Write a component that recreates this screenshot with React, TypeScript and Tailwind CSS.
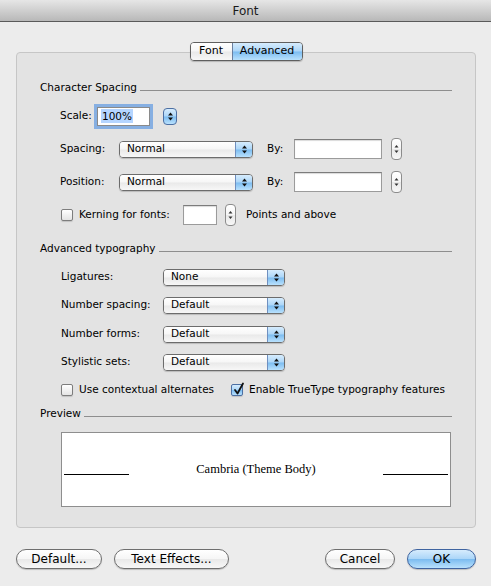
import React from "react";

// Aqua-style gradients used across the dialog
const BLUE = "bg-[linear-gradient(to_bottom,#d6ecfd_0%,#acd6f8_48%,#7cbcf0_52%,#b9e1fd_100%)]";
const WHITE = "bg-[linear-gradient(to_bottom,#ffffff_0%,#f6f6f6_48%,#e9e9e9_52%,#f7f7f7_100%)]";

function Arrows({ color = "#111" }: { color?: string }) {
  return (
    <svg width="7" height="11" viewBox="0 0 7 11">
      <path d="M3.5 1.5 L6 4.5 H1 Z" fill={color} />
      <path d="M3.5 9.5 L6 6.5 H1 Z" fill={color} />
    </svg>
  );
}

function Popup({ value, width }: { value: string; width: string }) {
  return (
    <div
      className={`flex h-[17px] ${width} overflow-hidden rounded-[4px] border border-[#6c6c6c] shadow-[0_1px_1px_rgba(0,0,0,0.18)]`}
    >
      <div className={`flex flex-1 items-center pl-[7px] ${WHITE}`}>{value}</div>
      <div className={`flex w-[17px] items-center justify-center border-l border-[#6f8fbf] ${BLUE}`}>
        <Arrows />
      </div>
    </div>
  );
}

function Stepper({ h = "h-[22px]", w = "w-[11px]" }: { h?: string; w?: string }) {
  return (
    <div
      className={`flex ${h} ${w} items-center justify-center rounded-[4px] border border-[#8c8c8c] ${WHITE}`}
    >
      <svg width="5" height="12" viewBox="0 0 5 12">
        <path d="M2.5 2 L4.5 4.5 H0.5 Z" fill="#333" />
        <path d="M2.5 10 L4.5 7.5 H0.5 Z" fill="#333" />
      </svg>
    </div>
  );
}

function Field({ width, h = "h-[20px]" }: { width: string; h?: string }) {
  return (
    <div
      className={`${width} ${h} border border-[#9b9b9b] border-t-[#7c7c7c] bg-white shadow-[inset_0_1px_1px_rgba(0,0,0,0.15)]`}
    />
  );
}

function Checkbox({ checked = false }: { checked?: boolean }) {
  return (
    <div
      className={`relative h-[12px] w-[12px] rounded-[2px] border ${
        checked ? `border-[#4c6fa3] ${BLUE}` : `border-[#7d7d7d] bg-[linear-gradient(to_bottom,#ffffff,#e4e4e4)]`
      } shadow-[0_1px_1px_rgba(0,0,0,0.15)]`}
    >
      {checked && (
        <svg className="absolute -top-[3px] left-[1px]" width="12" height="14" viewBox="0 0 12 14">
          <path d="M2 8 L4.5 11.5 L10 1.5" fill="none" stroke="#111" strokeWidth="1.8" strokeLinecap="round" strokeLinejoin="round" />
        </svg>
      )}
    </div>
  );
}

function Heading({ title }: { title: string }) {
  return (
    <div className="flex h-[14px] items-center">
      <span className="leading-none">{title}</span>
      <div className="ml-[3px] mt-[7px] h-px flex-1 bg-[#8e8e8e]" />
    </div>
  );
}

function Button({ label, width, primary = false }: { label: string; width: string; primary?: boolean }) {
  return (
    <div
      className={`flex h-[20px] ${width} items-center justify-center rounded-full border text-[12px] ${
        primary ? `border-[#3f64a0] ${BLUE}` : `border-[#6e6e6e] ${WHITE}`
      } shadow-[0_1px_1px_rgba(0,0,0,0.2)]`}
    >
      {label}
    </div>
  );
}

export default function App() {
  return (
    <div className="h-[586px] w-[491px] overflow-hidden bg-[#ececec] text-[10.5px] text-black [font-family:'DejaVu_Sans',sans-serif]">
      {/* title bar */}
      <div className="flex h-[22px] items-center justify-center border-b border-[#5a5a5a] bg-[linear-gradient(to_bottom,#e6e6e6,#b8b8b8)] text-[12px] text-[#1a1a1a]">
        Font
      </div>

      {/* tabs */}
      <div className="relative z-10 mt-[20px] flex justify-center pl-[1px]">
        <div className="flex h-[19px] overflow-hidden rounded-[4px] border border-[#5f5f5f] text-[11px] shadow-[0_1px_1px_rgba(0,0,0,0.2)]">
          <div className={`flex w-[41px] items-center justify-center ${WHITE}`}>Font</div>
          <div className={`flex w-[70px] items-center justify-center border-l border-[#6a7f9f] ${BLUE}`}>Advanced</div>
        </div>
      </div>

      {/* group box */}
      <div className="-mt-[9px] ml-[16px] w-[460px] rounded-[4px] border border-[#c6c6c6] bg-[#e3e3e3] px-[23px] pb-[20px] pt-[27px]">
        <Heading title="Character Spacing" />

        <div className="ml-[20px] mt-[11px] flex h-[22px] items-center">
          <span className="w-[37px]">Scale:</span>
          <div className="flex h-[19px] w-[53px] items-center border border-[#8a8a8a] bg-white pl-[3px] ring-[3px] ring-[#86afe2]">
            <span className="bg-[#b5d5ff] px-[1px] leading-[14px]">100%</span>
          </div>
          <div className={`ml-[13px] flex h-[17px] w-[14px] items-center justify-center rounded-[4px] border border-[#4c6fa3] ${BLUE}`}>
            <Arrows />
          </div>
        </div>

        {["Spacing:", "Position:"].map((label) => (
          <div key={label} className="ml-[20px] mt-[11px] flex h-[22px] items-center">
            <span className="w-[59px]">{label}</span>
            <Popup value="Normal" width="w-[134px]" />
            <span className="ml-[14px] w-[27px]">By:</span>
            <Field width="w-[88px]" />
            <div className="ml-[9px]">
              <Stepper />
            </div>
          </div>
        ))}

        <div className="ml-[21px] mt-[11px] flex h-[22px] items-center">
          <Checkbox />
          <span className="ml-[6px] w-[104px]">Kerning for fonts:</span>
          <Field width="w-[34px]" />
          <div className="ml-[8px]">
            <Stepper />
          </div>
          <span className="ml-[10px]">Points and above</span>
        </div>

        <div className="mt-[15px]">
          <Heading title="Advanced typography" />
        </div>

        {[
          ["Ligatures:", "None", "mt-[11px]"],
          ["Number spacing:", "Default", "mt-[6px]"],
          ["Number forms:", "Default", "mt-[7px]"],
          ["Stylistic sets:", "Default", "mt-[6px]"],
        ].map(([label, value, mt]) => (
          <div key={label} className={`ml-[21px] ${mt} flex h-[22px] items-center`}>
            <span className="w-[102px]">{label}</span>
            <Popup value={value} width="w-[122px]" />
          </div>
        ))}

        <div className="ml-[21px] mt-[6px] flex h-[22px] items-center">
          <Checkbox />
          <span className="ml-[6px] w-[152px]">Use contextual alternates</span>
          <Checkbox checked />
          <span className="ml-[6px]">Enable TrueType typography features</span>
        </div>

        <div className="mt-[5px]">
          <Heading title="Preview" />
        </div>

        <div className="ml-[21px] mt-[12px] flex h-[75px] w-[390px] items-center border border-[#8e8e8e] bg-white px-[2px]">
          <div className="mt-[9px] h-px w-[65px] bg-black" />
          <div className="flex-1 text-center text-[12.5px] [font-family:'Liberation_Serif',serif]">
            Cambria (Theme Body)
          </div>
          <div className="mt-[9px] h-px w-[65px] bg-black" />
        </div>
      </div>

      {/* dialog buttons */}
      <div className="ml-[16px] mt-[21px] flex w-[460px] items-center">
        <Button label="Default..." width="w-[86px]" />
        <div className="ml-[12px]">
          <Button label="Text Effects..." width="w-[115px]" />
        </div>
        <div className="ml-auto">
          <Button label="Cancel" width="w-[70px]" />
        </div>
        <div className="ml-[12px]">
          <Button label="OK" width="w-[69px]" primary />
        </div>
      </div>
    </div>
  );
}
